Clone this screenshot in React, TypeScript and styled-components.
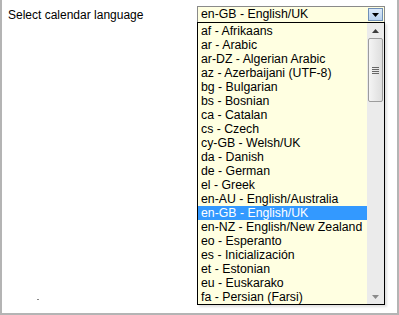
import React, { useState } from 'react';
import styled, { createGlobalStyle } from 'styled-components';

const GlobalStyle = createGlobalStyle`
  html, body {
    margin: 0;
    padding: 0;
    background: #fff;
  }
  body {
    font-family: "Liberation Sans", Arial, sans-serif;
  }
`;

const languages = [
  'af - Afrikaans',
  'ar - Arabic',
  'ar-DZ - Algerian Arabic',
  'az - Azerbaijani (UTF-8)',
  'bg - Bulgarian',
  'bs - Bosnian',
  'ca - Catalan',
  'cs - Czech',
  'cy-GB - Welsh/UK',
  'da - Danish',
  'de - German',
  'el - Greek',
  'en-AU - English/Australia',
  'en-GB - English/UK',
  'en-NZ - English/New Zealand',
  'eo - Esperanto',
  'es - Inicialización',
  'et - Estonian',
  'eu - Euskarako',
  'fa - Persian (Farsi)',
];

const App = () => {
  const [selected, setSelected] = useState('en-GB - English/UK');

  return (
    <>
      <GlobalStyle />
      <Frame>
        <FieldRow>
          <Label>Select calendar language</Label>
          <SelectWrap>
            <SelectBox>
              <SelectValue>{selected}</SelectValue>
              <DropButton>
                <svg width="7" height="4" viewBox="0 0 7 4">
                  <path d="M0 0h7L3.5 4z" fill="#000" />
                </svg>
              </DropButton>
            </SelectBox>
            <ListBox>
              <Options>
                {languages.map((lang) => (
                  <Option
                    key={lang}
                    $active={lang === selected}
                    onClick={() => setSelected(lang)}
                  >
                    {lang}
                  </Option>
                ))}
              </Options>
              <ScrollBar>
                <ScrollArrow>
                  <svg width="7" height="4" viewBox="0 0 7 4">
                    <path d="M3.5 0L7 4H0z" fill="#3c3c3c" />
                  </svg>
                </ScrollArrow>
                <Thumb>
                  <Grip />
                  <Grip />
                  <Grip />
                  <Grip />
                </Thumb>
                <Track />
                <ScrollArrow>
                  <svg width="7" height="4" viewBox="0 0 7 4">
                    <path d="M0 0h7L3.5 4z" fill="#8a8a8a" />
                  </svg>
                </ScrollArrow>
              </ScrollBar>
            </ListBox>
          </SelectWrap>
        </FieldRow>
        <Speck />
      </Frame>
    </>
  );
};

const Frame = styled.div`
  box-sizing: border-box;
  width: 399px;
  height: 315px;
  border: 2px solid #b4b4b4;
  border-top: none;
  padding: 6px 0 0 6px;
  position: relative;
`;

const FieldRow = styled.div`
  display: grid;
  grid-template-columns: 189px 188px;
  align-items: start;
`;

const Label = styled.div`
  font-size: 12px;
  line-height: 17px;
  color: #000;
  padding-top: 1px;
`;

const SelectWrap = styled.div`
  position: relative;
`;

const SelectBox = styled.div`
  box-sizing: border-box;
  height: 17px;
  border: 1px solid #8a8a8a;
  background: #ffffe1;
  display: flex;
  align-items: center;
  justify-content: space-between;
  padding: 0 1px 0 3px;
`;

const SelectValue = styled.span`
  font-size: 12.3px;
  line-height: 15px;
  color: #000;
`;

const DropButton = styled.div`
  box-sizing: border-box;
  width: 15px;
  height: 13px;
  border: 1px solid #6f8fb8;
  background: linear-gradient(#dbe9f9, #b9d2ef);
  display: flex;
  align-items: center;
  justify-content: center;
`;

const ListBox = styled.div`
  position: absolute;
  top: 16px;
  left: 0;
  box-sizing: border-box;
  width: 188px;
  height: 283px;
  border: 1px solid #000;
  background: #ffffe1;
  display: flex;
  box-shadow: 2px 2px 2px rgba(0, 0, 0, 0.12);
`;

const Options = styled.div`
  flex: 1;
  padding-top: 1px;
`;

const Option = styled.div<{ $active: boolean }>`
  height: 14px;
  line-height: 14px;
  font-size: 12.3px;
  padding-left: 3px;
  white-space: nowrap;
  color: ${(p) => (p.$active ? '#fff' : '#000')};
  background: ${(p) => (p.$active ? '#3399ff' : 'transparent')};
  cursor: default;
`;

const ScrollBar = styled.div`
  width: 17px;
  background: #ebebeb;
  display: flex;
  flex-direction: column;
`;

const ScrollArrow = styled.div`
  height: 15px;
  display: flex;
  align-items: center;
  justify-content: center;
`;

const Thumb = styled.div`
  box-sizing: border-box;
  height: 64px;
  margin: 0 1px;
  border: 1px solid #9c9c9c;
  border-radius: 2px;
  background: linear-gradient(90deg, #f4f4f4, #dedede);
  display: flex;
  flex-direction: column;
  align-items: center;
  justify-content: center;
  gap: 1px;
`;

const Grip = styled.div`
  width: 7px;
  height: 1px;
  background: #666;
`;

const Track = styled.div`
  flex: 1;
`;

const Speck = styled.div`
  position: absolute;
  left: 35px;
  top: 299px;
  width: 2px;
  height: 1px;
  background: #888;
`;

export default App;
